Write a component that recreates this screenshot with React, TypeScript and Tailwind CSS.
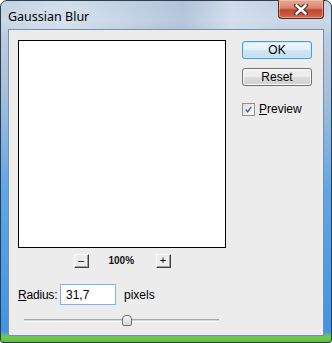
import React from 'react';

const font = { fontFamily: '"Liberation Sans", Arial, sans-serif' };

const WinButton: React.FC<{ label: string; isDefault?: boolean }> = ({ label, isDefault }) => (
  <div
    className={`w-[70px] h-[18px] rounded-[3px] border flex items-center justify-center text-[12px] text-black ${
      isDefault
        ? 'border-[#4a9ad8] bg-[linear-gradient(180deg,#f0f7fc_0%,#e3f0f9_50%,#cfe6f5_51%,#c2def0_100%)] shadow-[inset_0_0_0_1px_#c8ecfc]'
        : 'border-[#707070] bg-[linear-gradient(180deg,#f2f2f2_0%,#ebebeb_50%,#dddddd_51%,#cfcfcf_100%)] shadow-[inset_0_0_0_1px_#fbfbfb]'
    }`}
  >
    {label}
  </div>
);

const ZoomButton: React.FC<{ sign: string }> = ({ sign }) => (
  <div className="w-[15px] h-[14px] bg-[#ececec] border-t border-l border-t-white border-l-white border-r border-b border-r-[#404040] border-b-[#404040] shadow-[inset_-1px_-1px_0_#a0a0a0] flex items-center justify-center text-[11px] leading-none text-black">
    {sign}
  </div>
);

export default function App() {
  return (
    <div
      className="w-[332px] h-[343px] rounded-t-[7px] rounded-b-[3px] border border-[#2f3d4e] flex flex-col bg-[linear-gradient(180deg,#c2d2e4_0px,#cad8e8_20px,#b9cbe0_40px,#a6c0dc_90px,#5ea6e8_190px,#3f95e4_330px,#6fcc4c_336px,#5ab63c_343px)]"
      style={font}
    >
      <div className="h-[28px] flex items-start justify-between pl-[7px] pr-[7px] bg-[linear-gradient(90deg,transparent_0%,rgba(255,255,255,0.25)_20%,transparent_35%,rgba(120,150,185,0.25)_55%,rgba(255,255,255,0.2)_70%,transparent_85%)]">
        <div
          className="mt-[7px] text-[12.5px] text-black"
          style={{ fontFamily: '"Noto Sans", "Open Sans", sans-serif' }}
        >
          Gaussian Blur
        </div>
        <div className="w-[46px] h-[19px] -mt-px rounded-b-[4px] border border-t-0 border-[#5b2a24] bg-[linear-gradient(180deg,#e9a996_0%,#d98470_45%,#c2442c_55%,#cf6a4c_100%)] shadow-[inset_0_0_0_1px_rgba(255,220,200,0.45)] flex items-center justify-center">
          <svg width="14" height="11" viewBox="0 0 14 11">
            <path d="M2 1 L12 10 M12 1 L2 10" stroke="#4a2520" strokeWidth="4.5" strokeLinecap="square" />
            <path d="M2.5 1.5 L11.5 9.5 M11.5 1.5 L2.5 9.5" stroke="#ffffff" strokeWidth="2.6" strokeLinecap="square" />
          </svg>
        </div>
      </div>

      <div className="mx-[7px] mb-[6px] flex-1 border border-[#7f8fa3] bg-[#ececec] flex pl-[9px] pt-[10px]">
        <div className="w-[208px] flex flex-col">
          <div className="w-[208px] h-[208px] border border-black bg-white" />
          <div className="mt-[5px] flex items-center justify-center">
            <ZoomButton sign="–" />
            <span className="ml-[20px] mr-[22px] w-[25px] text-[10px] font-bold text-[#111] text-center">100%</span>
            <ZoomButton sign="+" />
          </div>
          <div className="mt-[16px] flex items-center">
            <span className="w-[42px] text-[12px] text-black tracking-[-0.2px]">
              <span className="underline">R</span>adius:
            </span>
            <div className="w-[56px] h-[21px] border border-[#7eb4ea] bg-white flex items-center pl-[5px] text-[12px] text-black">
              31,7
            </div>
            <span className="ml-[8px] text-[12px] text-black">pixels</span>
          </div>
          <div className="mt-[10px] ml-[6px] w-[195px] h-[11px] relative flex items-center">
            <div className="w-full h-[3px] border-t border-t-[#a8a8a8] border-b border-b-white bg-[#d6d6d6]" />
            <div className="absolute left-[98px] top-0 w-[10px] h-[11px] rounded-t-[4px] rounded-b-[2px] border border-[#707070] bg-[linear-gradient(180deg,#f6f6f6,#d8d8d8)]" />
          </div>
        </div>

        <div className="ml-[16px] pt-[1px] flex flex-col">
          <WinButton label="OK" isDefault />
          <div className="mt-[9px]">
            <WinButton label="Reset" />
          </div>
          <div className="mt-[14px] flex items-center">
            <div className="w-[13px] h-[13px] border border-[#8f8f8f] bg-[linear-gradient(135deg,#dcdcdc,#ffffff)] p-[2px] flex items-center justify-center">
              <svg width="9" height="9" viewBox="0 0 9 9">
                <path d="M1 4.5 L3.5 7.5 L8 1" stroke="#3c5fb0" strokeWidth="1.8" fill="none" />
              </svg>
            </div>
            <span className="ml-[4px] text-[12px] text-black">
              <span className="underline">P</span>review
            </span>
          </div>
        </div>
      </div>
    </div>
  );
}
